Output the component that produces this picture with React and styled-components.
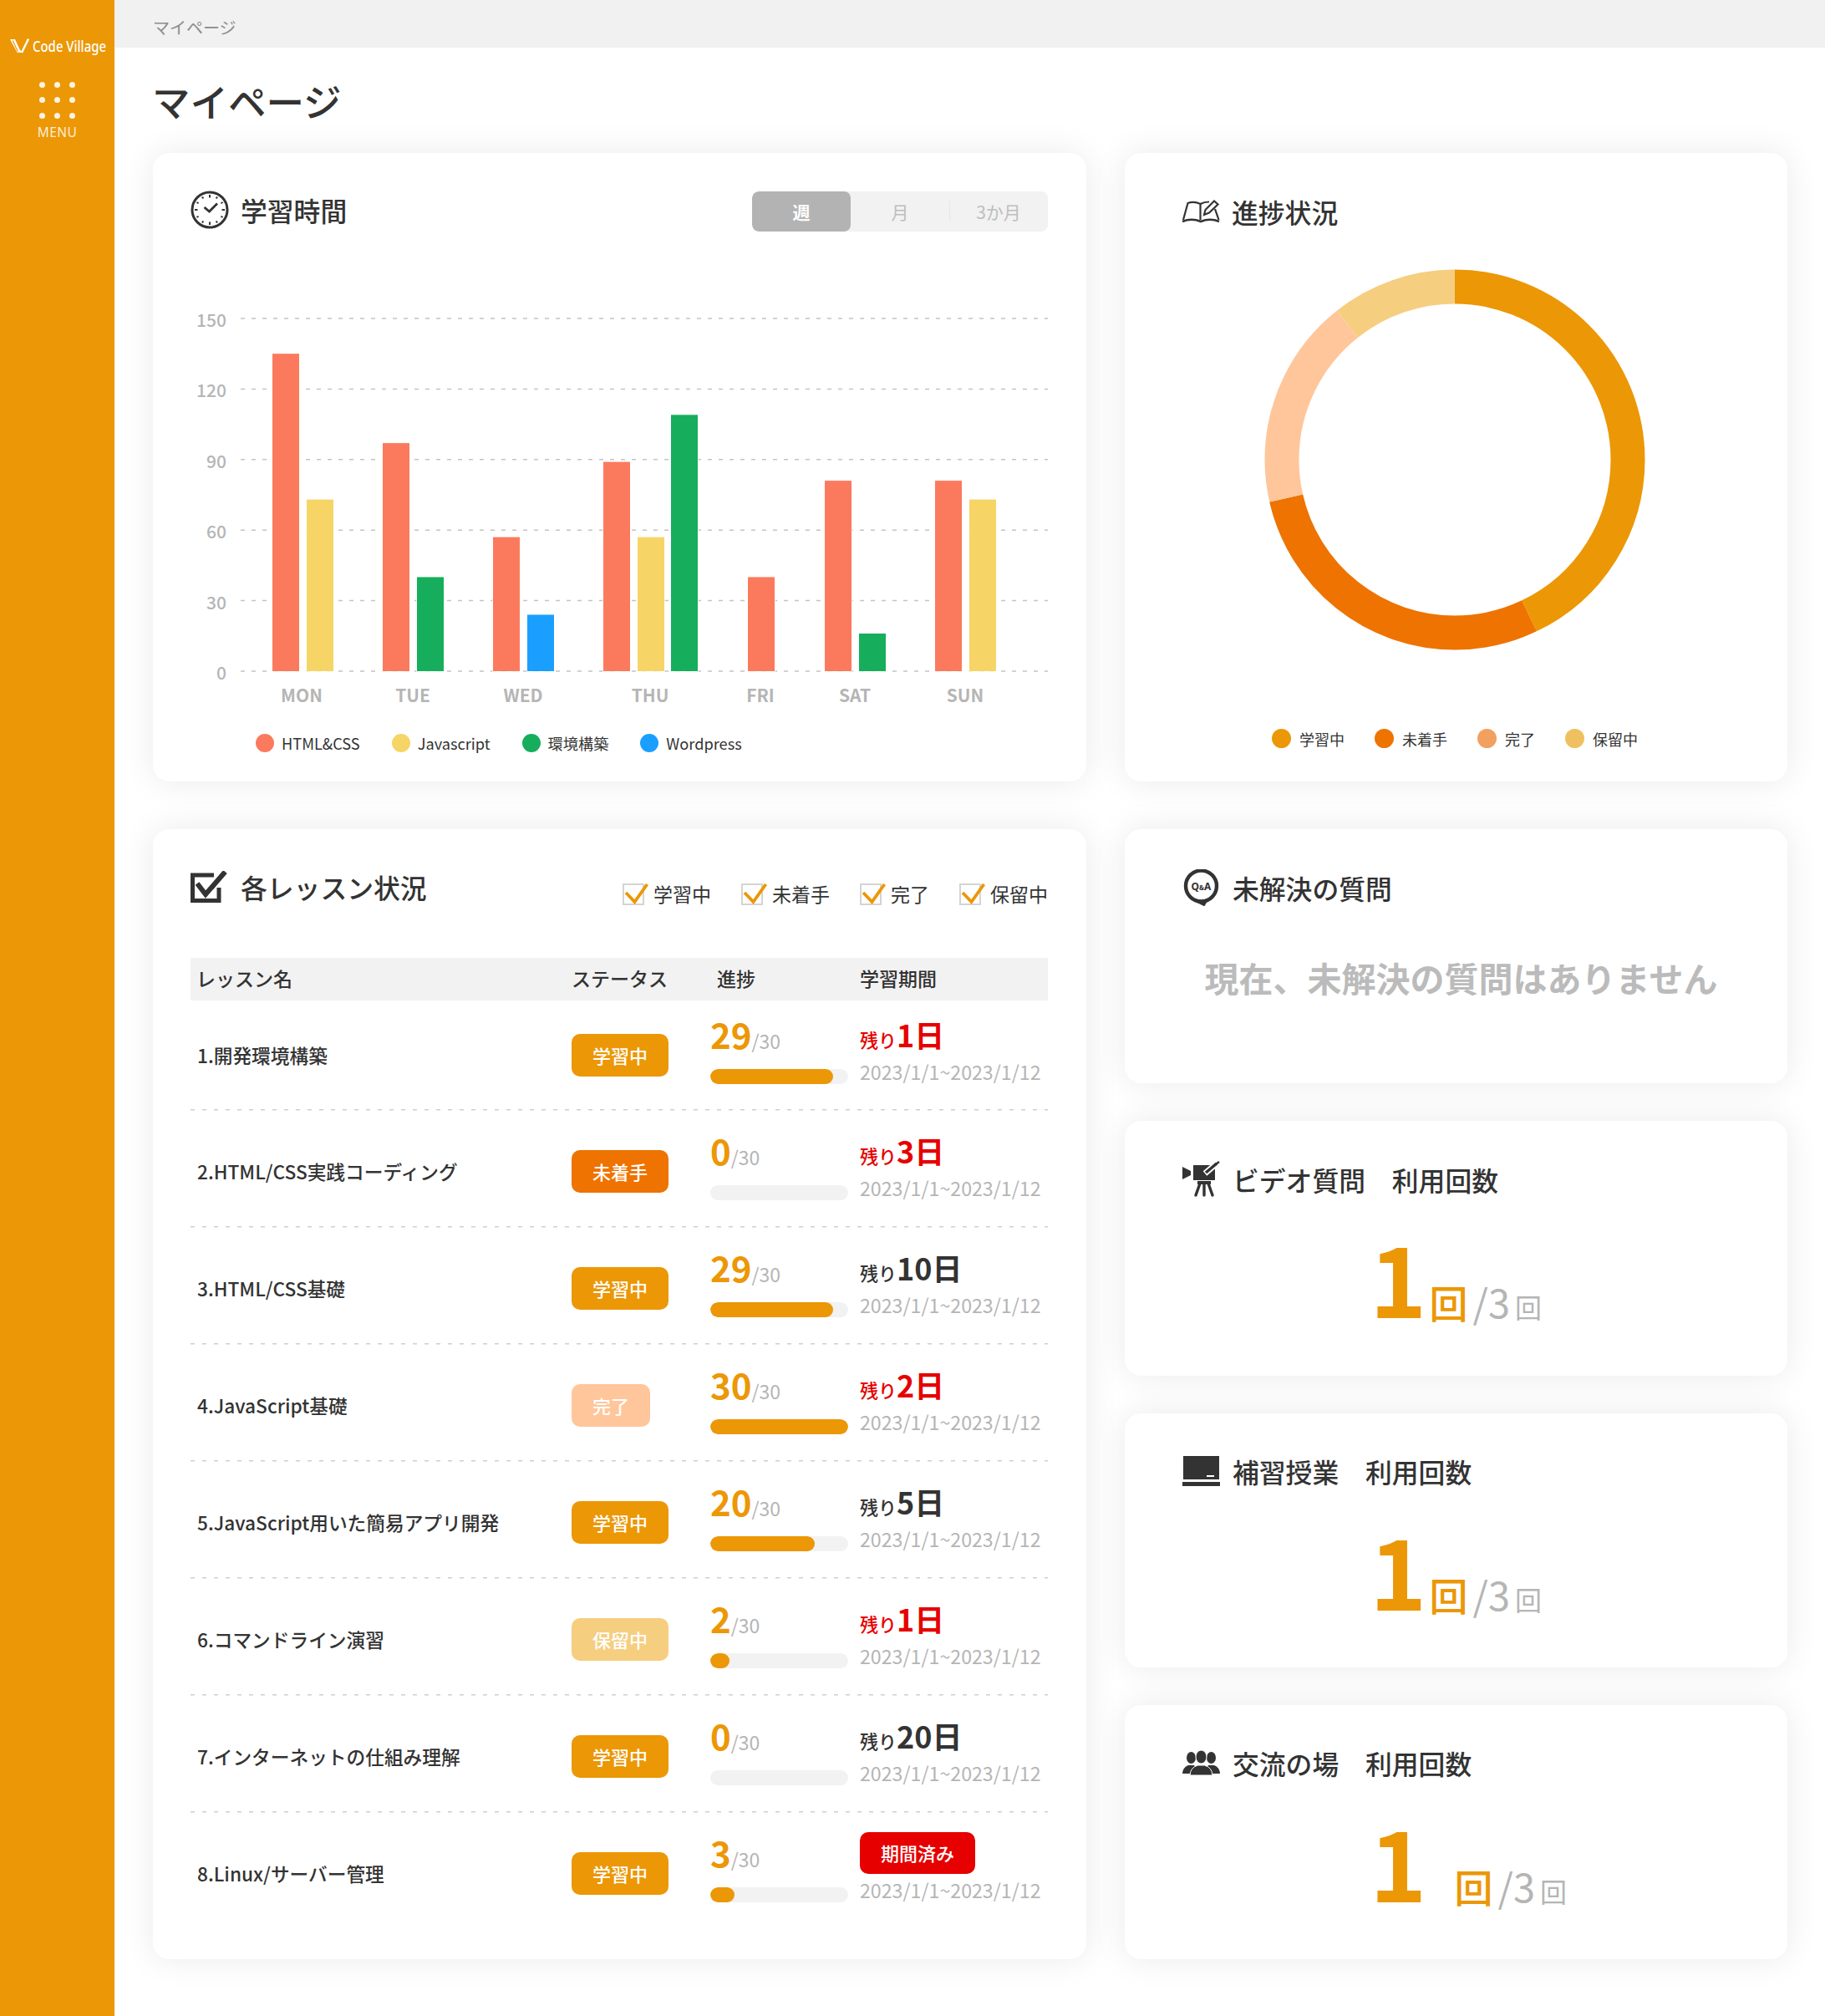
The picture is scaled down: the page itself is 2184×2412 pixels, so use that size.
import React from "react";
import styled, { createGlobalStyle } from "styled-components";

const ORANGE = "#EC9706";
const DEEP = "#EE7300";
const PEACH = "#FFC69B";
const SAND = "#F6CE80";
const RED = "#E60000";
const INK = "#333333";
const MUTED = "#B5B5B5";

const GlobalStyle = createGlobalStyle`
    * {
        box-sizing: border-box;
    }
    html, body {
        margin: 0;
        padding: 0;
        background: #fff;
    }
    body {
        font-family: "Noto Sans CJK JP", "Noto Sans", sans-serif;
        color: ${INK};
    }
`;

const CHART_COLORS = { html: "#FB7A5D", js: "#F6D566", env: "#16AE5C", wp: "#1A9FFF" };

const chartDays = [
    { label: "MON", center: 133, bars: [[98, 135, "html"], [139, 73, "js"]] },
    { label: "TUE", center: 266, bars: [[230, 97, "html"], [271, 40, "env"]] },
    { label: "WED", center: 398, bars: [[362, 57, "html"], [403, 24, "wp"]] },
    { label: "THU", center: 550, bars: [[494, 89, "html"], [535, 57, "js"], [575, 109, "env"]] },
    { label: "FRI", center: 682, bars: [[667, 40, "html"]] },
    { label: "SAT", center: 795, bars: [[759, 81, "html"], [800, 16, "env"]] },
    { label: "SUN", center: 927, bars: [[891, 81, "html"], [932, 73, "js"]] },
];

const chartLegend = [
    { color: CHART_COLORS.html, label: "HTML&CSS" },
    { color: CHART_COLORS.js, label: "Javascript" },
    { color: CHART_COLORS.env, label: "環境構築" },
    { color: CHART_COLORS.wp, label: "Wordpress" },
];

const donutSegments = [
    { color: ORANGE, from: 0, to: 0.429 },
    { color: DEEP, from: 0.429, to: 0.714 },
    { color: PEACH, from: 0.714, to: 0.893 },
    { color: SAND, from: 0.893, to: 1 },
];

const donutLegend = [
    { color: ORANGE, label: "学習中" },
    { color: DEEP, label: "未着手" },
    { color: "#F2A060", label: "完了" },
    { color: "#EFC060", label: "保留中" },
];

const filters = ["学習中", "未着手", "完了", "保留中"];

const STATUS_COLORS = { 学習中: ORANGE, 未着手: DEEP, 完了: PEACH, 保留中: SAND };

const lessons = [
    { name: "1.開発環境構築", status: "学習中", done: 29, fill: 0.89, days: 1, urgent: true },
    { name: "2.HTML/CSS実践コーディング", status: "未着手", done: 0, fill: 0, days: 3, urgent: true },
    { name: "3.HTML/CSS基礎", status: "学習中", done: 29, fill: 0.89, days: 10 },
    { name: "4.JavaScript基礎", status: "完了", done: 30, fill: 1, days: 2, urgent: true },
    { name: "5.JavaScript用いた簡易アプリ開発", status: "学習中", done: 20, fill: 0.76, days: 5 },
    { name: "6.コマンドライン演習", status: "保留中", done: 2, fill: 0.14, days: 1, urgent: true },
    { name: "7.インターネットの仕組み理解", status: "学習中", done: 0, fill: 0, days: 20 },
    { name: "8.Linux/サーバー管理", status: "学習中", done: 3, fill: 0.175, expired: true },
];

const ClockIcon = () => (
    <svg width="46" height="46" viewBox="0 0 46 46" fill="none" stroke={INK}>
        <circle cx="23" cy="23" r="21" strokeWidth="3" />
        {Array.from({ length: 12 }).map((_, i) => {
            const a = (i * Math.PI) / 6;
            const long = i % 3 === 0;
            return (
                <line
                    key={i}
                    x1={23 + Math.sin(a) * (long ? 14.5 : 15.5)}
                    y1={23 - Math.cos(a) * (long ? 14.5 : 15.5)}
                    x2={23 + Math.sin(a) * 18}
                    y2={23 - Math.cos(a) * 18}
                    strokeWidth="2"
                />
            );
        })}
        <path d="M16.5 20 L22.5 25 L32 15.5" strokeWidth="2.8" />
    </svg>
);

const BookIcon = () => (
    <svg width="46" height="28" viewBox="0 0 46 28" fill="none" stroke={INK} strokeWidth="2.2">
        <path d="M2 24 L7.5 4 Q15 1.5 22.5 5 L22.5 24" />
        <path d="M22.5 5 Q27 2.5 33 2.5" />
        <path d="M40 11 L44.5 24" />
        <path d="M1 26 Q12 21.5 23 26 Q34 21.5 45 26" strokeWidth="2.6" />
        <path d="M27 18 L28.5 12 L39 1.5 L43.5 5.5 L33 15.5 Z" />
    </svg>
);

const CheckedIcon = () => (
    <svg width="44" height="38" viewBox="0 0 44 38" fill="none" stroke={INK}>
        <path d="M34 20 V35.5 H2.5 V5 H28" strokeWidth="5" />
        <path d="M8 15 L18 28 L41.5 1" strokeWidth="6" />
    </svg>
);

const QaIcon = () => (
    <svg width="45" height="44" viewBox="0 0 45 44" fill="none" stroke={INK}>
        <circle cx="22.5" cy="20" r="18.5" strokeWidth="4.4" />
        <path d="M15 37.5 L26 43 L30 36" fill={INK} strokeWidth="2" strokeLinejoin="round" />
        <text
            x="22.5"
            y="24.5"
            textAnchor="middle"
            fontSize="12"
            fontWeight="700"
            fontFamily="'Noto Sans', sans-serif"
            fill={INK}
            stroke="none"
        >
            Q<tspan fontSize="8">&amp;</tspan>A
        </text>
    </svg>
);

const VideoIcon = () => (
    <svg width="45" height="43" viewBox="0 0 45 43" fill="none">
        <path d="M0 7 L10 12 V17 L0 22 Z" fill={INK} />
        <rect x="13" y="5" width="26" height="18" fill={INK} />
        <path d="M27 15 L41 3" stroke="#fff" strokeWidth="7" />
        <path d="M28 14 L41 3" stroke={INK} strokeWidth="3.5" />
        <path d="M39 4.5 L44 1" stroke={INK} strokeWidth="2.5" />
        <rect x="18" y="24" width="16" height="4" fill={INK} />
        <path d="M21 27 L16 41 M26 27 V41 M31 27 L36 41" stroke={INK} strokeWidth="3.4" strokeLinecap="round" />
    </svg>
);

const BoardIcon = () => (
    <svg width="45" height="36" viewBox="0 0 45 36">
        <rect x="1" y="0" width="43" height="28" fill={INK} />
        <rect x="29" y="23" width="9" height="2" fill="#fff" />
        <rect x="0" y="31" width="45" height="5" fill={INK} />
    </svg>
);

const PeopleIcon = () => (
    <svg width="45" height="30" viewBox="0 0 45 30" fill={INK}>
        <ellipse cx="10.5" cy="9" rx="5.5" ry="7" />
        <path d="M0 28 Q0.5 20.5 7 18 L14 18 L20 28 Z" />
        <ellipse cx="34.5" cy="9" rx="5.5" ry="7" />
        <path d="M45 28 Q44.5 20.5 38 18 L31 18 L25 28 Z" />
        <ellipse cx="22.5" cy="8" rx="6.5" ry="8" stroke="#fff" strokeWidth="1" />
        <path d="M9 30 Q9.5 20.5 18.5 18 L26.5 18 Q35.5 20.5 36 30 Z" stroke="#fff" strokeWidth="1" />
    </svg>
);

const LogoMark = () => (
    <svg width="23" height="18" viewBox="0 0 23 18" fill="none">
        <path d="M0 1 H6 L11.5 13 L15 16.8 H8.5 Z" fill="#fff" />
        <path d="M3.2 2.5 L9.2 15.5" stroke={ORANGE} strokeWidth="1.2" />
        <path d="M14 17 L22 0.5" stroke="#fff" strokeWidth="2.4" />
    </svg>
);

const StudyChart = () => {
    const zero = 443;
    const unit = 84.4 / 30;
    return (
        <ChartSvg width="1027" height="490" viewBox="0 0 1027 490">
            {[0, 30, 60, 90, 120, 150].map((tick) => (
                <g key={tick}>
                    <line
                        x1="60"
                        x2="1026"
                        y1={zero - tick * unit}
                        y2={zero - tick * unit}
                        stroke="#C4C4C4"
                        strokeWidth="1.5"
                        strokeDasharray="5 8"
                    />
                    <AxisText x="43" y={zero - tick * unit + 10} textAnchor="end">
                        {tick}
                    </AxisText>
                </g>
            ))}
            {chartDays.map((day) => (
                <g key={day.label}>
                    {day.bars.map(([x, value, kind]) => (
                        <rect
                            key={kind}
                            x={x}
                            y={zero - value * unit}
                            width="32"
                            height={value * unit}
                            fill={CHART_COLORS[kind]}
                            stroke="#fff"
                            strokeWidth="1.5"
                            paintOrder="stroke"
                        />
                    ))}
                    <DayText x={day.center} y="480" textAnchor="middle">
                        {day.label}
                    </DayText>
                </g>
            ))}
        </ChartSvg>
    );
};

const ProgressDonut = () => {
    const r = 207;
    const length = 2 * Math.PI * r;
    return (
        <DonutSvg width="456" height="456" viewBox="0 0 456 456">
            {donutSegments.map((seg) => (
                <circle
                    key={seg.color}
                    cx="228"
                    cy="228"
                    r={r}
                    fill="none"
                    stroke={seg.color}
                    strokeWidth="41"
                    strokeDasharray={`${(seg.to - seg.from) * length} ${length}`}
                    strokeDashoffset={-seg.from * length}
                    transform="rotate(-90 228 228)"
                />
            ))}
        </DonutSvg>
    );
};

const UsageCard = ({ icon, title, wide }) => (
    <SideCard>
        <CardTitle>
            <IconSlot>{icon}</IconSlot>
            {title}
        </CardTitle>
        <UsageLine>
            <UsageNumber>1</UsageNumber>
            <UsageUnit $wide={wide}>回</UsageUnit>
            <UsageTotal>/3</UsageTotal>
            <UsageTotalUnit>回</UsageTotalUnit>
        </UsageLine>
    </SideCard>
);

const LessonRow = ({ lesson }) => (
    <Row>
        <LessonName>{lesson.name}</LessonName>
        <div>
            <Status $color={STATUS_COLORS[lesson.status]}>{lesson.status}</Status>
        </div>
        <ProgressCell>
            <ProgressNumbers>
                <ProgressDone>{lesson.done}</ProgressDone>
                <ProgressTotal>/30</ProgressTotal>
            </ProgressNumbers>
            <Track>
                <Fill style={{ width: `${lesson.fill * 100}%` }} />
            </Track>
        </ProgressCell>
        <PeriodCell>
            <DeadlineSlot>
                {lesson.expired ? (
                    <Expired>期間済み</Expired>
                ) : (
                    <Remaining $urgent={lesson.urgent}>
                        残り<strong>{lesson.days}日</strong>
                    </Remaining>
                )}
            </DeadlineSlot>
            <Period>2023/1/1~2023/1/12</Period>
        </PeriodCell>
    </Row>
);

const App = () => {
    return (
        <Page>
            <GlobalStyle />
            <Sidebar>
                <Logo>
                    <LogoMark />
                    <LogoText>Code Village</LogoText>
                </Logo>
                <MenuDots>
                    {Array.from({ length: 9 }).map((_, i) => (
                        <MenuDot key={i} />
                    ))}
                </MenuDots>
                <MenuLabel>MENU</MenuLabel>
            </Sidebar>
            <Main>
                <Breadcrumb>マイページ</Breadcrumb>
                <Content>
                    <PageTitle>マイページ</PageTitle>
                    <TopGrid>
                        <Card>
                            <CardHeader>
                                <CardTitle>
                                    <IconSlot>
                                        <ClockIcon />
                                    </IconSlot>
                                    学習時間
                                </CardTitle>
                                <Segments>
                                    <Segment $active>週</Segment>
                                    <Segment>月</Segment>
                                    <Segment $divided>3か月</Segment>
                                </Segments>
                            </CardHeader>
                            <StudyChart />
                            <ChartLegend>
                                {chartLegend.map((item) => (
                                    <LegendItem key={item.label}>
                                        <LegendDot $color={item.color} />
                                        {item.label}
                                    </LegendItem>
                                ))}
                            </ChartLegend>
                        </Card>
                        <DonutCard>
                            <DonutTitle>
                                <IconSlot>
                                    <BookIcon />
                                </IconSlot>
                                進捗状況
                            </DonutTitle>
                            <ProgressDonut />
                            <DonutLegend>
                                {donutLegend.map((item) => (
                                    <DonutLegendItem key={item.label}>
                                        <LegendDot $color={item.color} $big />
                                        {item.label}
                                    </DonutLegendItem>
                                ))}
                            </DonutLegend>
                        </DonutCard>
                    </TopGrid>
                    <BottomGrid>
                        <Card>
                            <CardHeader>
                                <LessonTitle>
                                    <IconSlot>
                                        <CheckedIcon />
                                    </IconSlot>
                                    各レッスン状況
                                </LessonTitle>
                                <Filters>
                                    {filters.map((f) => (
                                        <Filter key={f}>
                                            <FilterBox>
                                                <FilterCheck width="32" height="26" viewBox="0 0 32 26" fill="none">
                                                    <path d="M4 11 L14.5 22 L29.5 1" stroke={ORANGE} strokeWidth="3.8" />
                                                </FilterCheck>
                                            </FilterBox>
                                            {f}
                                        </Filter>
                                    ))}
                                </Filters>
                            </CardHeader>
                            <TableHead>
                                <HeadCell $pad={7}>レッスン名</HeadCell>
                                <HeadCell>ステータス</HeadCell>
                                <HeadCell $pad={8}>進捗</HeadCell>
                                <HeadCell>学習期間</HeadCell>
                            </TableHead>
                            {lessons.map((lesson) => (
                                <LessonRow key={lesson.name} lesson={lesson} />
                            ))}
                        </Card>
                        <SideColumn>
                            <SideCard>
                                <CardTitle>
                                    <IconSlot>
                                        <QaIcon />
                                    </IconSlot>
                                    未解決の質問
                                </CardTitle>
                                <EmptyNote>現在、未解決の質問はありません</EmptyNote>
                            </SideCard>
                            <UsageCard icon={<VideoIcon />} title="ビデオ質問　利用回数" />
                            <UsageCard icon={<BoardIcon />} title="補習授業　利用回数" />
                            <UsageCard icon={<PeopleIcon />} title="交流の場　利用回数" wide />
                        </SideColumn>
                    </BottomGrid>
                </Content>
            </Main>
        </Page>
    );
};

export default App;

const Page = styled.div`
    display: flex;
    min-height: 100vh;
    width: 2184px;
`;

const Sidebar = styled.aside`
    width: 137px;
    flex-shrink: 0;
    background: ${ORANGE};
    display: flex;
    flex-direction: column;
    align-items: center;
    padding-top: 45px;
    color: #fff;
`;

const Logo = styled.div`
    display: flex;
    align-items: center;
    gap: 4px;
    width: 113px;
    height: 20px;

    svg {
        flex-shrink: 0;
    }
`;

const LogoText = styled.span`
    font-family: "Noto Sans", sans-serif;
    font-size: 18px;
    font-weight: 500;
    white-space: nowrap;
    transform: scaleX(0.83);
    transform-origin: left center;
`;

const MenuDots = styled.div`
    display: grid;
    grid-template-columns: repeat(3, 7px);
    grid-auto-rows: 7px;
    gap: 11.3px;
    margin-top: 33px;
`;

const MenuDot = styled.span`
    border-radius: 50%;
    background: #fdf3e3;
`;

const MenuLabel = styled.div`
    margin-top: 7.5px;
    font-family: "Noto Sans", sans-serif;
    font-size: 15.5px;
    line-height: 18px;
    letter-spacing: 0.4px;
    color: #fbeed8;
`;

const Main = styled.main`
    flex: 1;
    min-width: 0;
`;

const Breadcrumb = styled.div`
    height: 57px;
    background: #f1f1f1;
    padding: 20px 0 0 46px;
    font-size: 20px;
    line-height: 26px;
    color: #8c8c8c;
`;

const Content = styled.div`
    padding: 41px 45px 68px 46px;
`;

const PageTitle = styled.h1`
    margin: 0 0 40px -1px;
    font-size: 45.5px;
    line-height: 45px;
    font-weight: 500;
    color: ${INK};
`;

const TopGrid = styled.div`
    display: grid;
    grid-template-columns: 1117px 793px;
    gap: 46px;
    height: 752px;
`;

const BottomGrid = styled.div`
    display: grid;
    grid-template-columns: 1117px 793px;
    gap: 46px;
    height: 1352px;
    margin-top: 57px;
`;

const Card = styled.section`
    background: #fff;
    border-radius: 20px;
    box-shadow: 0 0 40px rgba(0, 0, 0, 0.085);
    padding: 46px 46px 0 45px;
`;

const DonutCard = styled(Card)`
    padding: 48px 72px 0 69px;
    display: flex;
    flex-direction: column;
    align-items: center;
`;

const SideColumn = styled.div`
    display: flex;
    flex-direction: column;
    gap: 45px;
`;

const SideCard = styled(Card)`
    flex: 1;
    padding: 48px 69px 0;
`;

const CardHeader = styled.div`
    display: flex;
    align-items: center;
    justify-content: space-between;
    height: 48px;
`;

const CardTitle = styled.h2`
    display: flex;
    align-items: center;
    align-self: flex-start;
    height: 46px;
    margin: -1.5px 0 0;
    font-size: 31.8px;
    line-height: 46px;
    font-weight: 500;
    color: ${INK};
    white-space: nowrap;
`;

const LessonTitle = styled(CardTitle)`
    margin-top: 0;
`;

const DonutTitle = styled(CardTitle)`
    margin-left: -1px;
`;

const IconSlot = styled.span`
    display: flex;
    align-items: center;
    justify-content: flex-start;
    width: 60px;
    flex-shrink: 0;
`;

const Segments = styled.div`
    display: flex;
    width: 354px;
    height: 48px;
    border-radius: 8px;
    background: #f2f2f2;
    overflow: hidden;
`;

const Segment = styled.div`
    position: relative;
    flex: 1;
    display: flex;
    align-items: center;
    justify-content: center;
    font-size: 21px;
    color: ${(p) => (p.$active ? "#fff" : "#bdbdbd")};
    font-weight: ${(p) => (p.$active ? 700 : 400)};
    background: ${(p) => (p.$active ? "#B3B3B3" : "transparent")};
    border-radius: ${(p) => (p.$active ? "8px" : "0")};

    ${(p) =>
        p.$divided &&
        `&::before {
            content: "";
            position: absolute;
            left: 0;
            top: 12px;
            bottom: 12px;
            width: 1px;
            background: #e6e6e6;
        }`}
`;

const ChartSvg = styled.svg`
    display: block;
    margin-top: 83px;
`;

const AxisText = styled.text`
    font-size: 21px;
    font-weight: 500;
    fill: ${MUTED};
`;

const DayText = styled.text`
    font-size: 21px;
    font-weight: 700;
    fill: ${MUTED};
`;

const ChartLegend = styled.div`
    display: flex;
    gap: 38px;
    margin-top: 26px;
    padding-left: 78px;
`;

const LegendItem = styled.div`
    display: flex;
    align-items: center;
    gap: 9px;
    font-size: 18.2px;
    line-height: 26px;
    color: ${INK};
`;

const LegendDot = styled.span`
    width: ${(p) => (p.$big ? 23 : 22)}px;
    height: ${(p) => (p.$big ? 23 : 22)}px;
    border-radius: 50%;
    background: ${(p) => p.$color};
    flex-shrink: 0;
`;

const DonutSvg = styled.svg`
    display: block;
    margin-top: 46.5px;
    flex-shrink: 0;
`;

const DonutLegend = styled.div`
    display: flex;
    gap: 36px;
    margin-top: 92.5px;
`;

const DonutLegendItem = styled(LegendItem)`
    gap: 10px;
    font-size: 18px;
`;

const Filters = styled.div`
    display: flex;
    gap: 36px;
    margin-top: 13px;
`;

const Filter = styled.div`
    display: flex;
    align-items: center;
    gap: 11px;
    font-size: 23px;
    line-height: 30px;
    color: ${INK};
`;

const FilterBox = styled.span`
    position: relative;
    width: 26px;
    height: 26px;
    margin-top: 3px;
    border: 2px solid #d4d4d4;
`;

const FilterCheck = styled.svg`
    position: absolute;
    left: -2px;
    top: -2px;
`;

const TableHead = styled.div`
    display: grid;
    grid-template-columns: 456px 166px 179px 1fr;
    align-items: center;
    height: 51px;
    margin-top: 59.5px;
    background: #f2f2f2;
`;

const HeadCell = styled.div`
    padding-left: ${(p) => p.$pad || 0}px;
    padding-bottom: 2px;
    font-size: 23px;
    font-weight: 500;
    line-height: 30px;
    color: ${INK};
`;

const Row = styled.div`
    display: grid;
    grid-template-columns: 456px 166px 179px 1fr;
    align-items: center;
    height: 140px;
    padding-top: 6px;
    background: repeating-linear-gradient(90deg, #cfcfcf 0 5px, transparent 5px 14px) bottom / 100% 1.5px no-repeat;

    &:nth-child(3) {
        height: 132px;
        padding-top: 0;
    }
    &:last-child {
        background: none;
    }
`;

const LessonName = styled.div`
    padding-left: 8px;
    font-size: 22.7px;
    font-weight: 500;
    line-height: 30px;
    color: ${INK};
    white-space: nowrap;
`;

const Status = styled.span`
    display: inline-flex;
    align-items: center;
    height: 51px;
    padding: 0 25px 2px;
    border-radius: 10px;
    background: ${(p) => p.$color};
    color: #fff;
    font-size: 22px;
    font-weight: 500;
    vertical-align: middle;
`;

const ProgressCell = styled.div`
    padding-bottom: 13px;
`;

const ProgressNumbers = styled.div`
    display: flex;
    align-items: baseline;
    height: 42px;
`;

const ProgressDone = styled.span`
    font-size: 42px;
    line-height: 42px;
    font-weight: 700;
    color: ${ORANGE};
`;

const ProgressTotal = styled.span`
    font-size: 23px;
    line-height: 42px;
    color: ${MUTED};
`;

const Track = styled.div`
    width: 165px;
    height: 18px;
    margin-top: 21px;
    border-radius: 9px;
    background: #f2f2f2;
    overflow: hidden;
`;

const Fill = styled.div`
    height: 100%;
    border-radius: 9px;
    background: ${ORANGE};
`;

const PeriodCell = styled.div`
    padding-bottom: 20px;
`;

const DeadlineSlot = styled.div`
    height: 58px;
`;

const Remaining = styled.div`
    padding-top: 6px;
    font-size: 22px;
    font-weight: 500;
    line-height: 36px;
    color: ${(p) => (p.$urgent ? RED : INK)};

    strong {
        font-size: 36px;
        font-weight: 700;
    }
`;

const Expired = styled.span`
    display: inline-flex;
    align-items: center;
    height: 50px;
    padding: 0 25px 2px;
    border-radius: 10px;
    background: ${RED};
    color: #fff;
    font-size: 22px;
    font-weight: 500;
`;

const Period = styled.div`
    font-size: 23.2px;
    line-height: 22px;
    color: ${MUTED};
    white-space: nowrap;
`;

const EmptyNote = styled.p`
    margin: 54px 0 0;
    padding-left: 12px;
    text-align: center;
    font-size: 41px;
    line-height: 60px;
    font-weight: 700;
    color: #bbbbbb;
    white-space: nowrap;
`;

const UsageLine = styled.div`
    display: flex;
    align-items: baseline;
    margin-top: 34.5px;
    padding-left: 224px;
    height: 116px;
`;

const UsageNumber = styled.span`
    font-size: 116px;
    line-height: 116px;
    font-weight: 700;
    color: ${ORANGE};
`;

const UsageUnit = styled.span`
    margin-left: ${(p) => (p.$wide ? 33 : 3)}px;
    font-size: 46px;
    font-weight: 500;
    color: ${ORANGE};
`;

const UsageTotal = styled.span`
    margin-left: 6px;
    font-size: 47px;
    font-weight: 400;
    color: ${MUTED};
`;

const UsageTotalUnit = styled.span`
    margin-left: 6px;
    font-size: 32px;
    font-weight: 400;
    color: ${MUTED};
`;
